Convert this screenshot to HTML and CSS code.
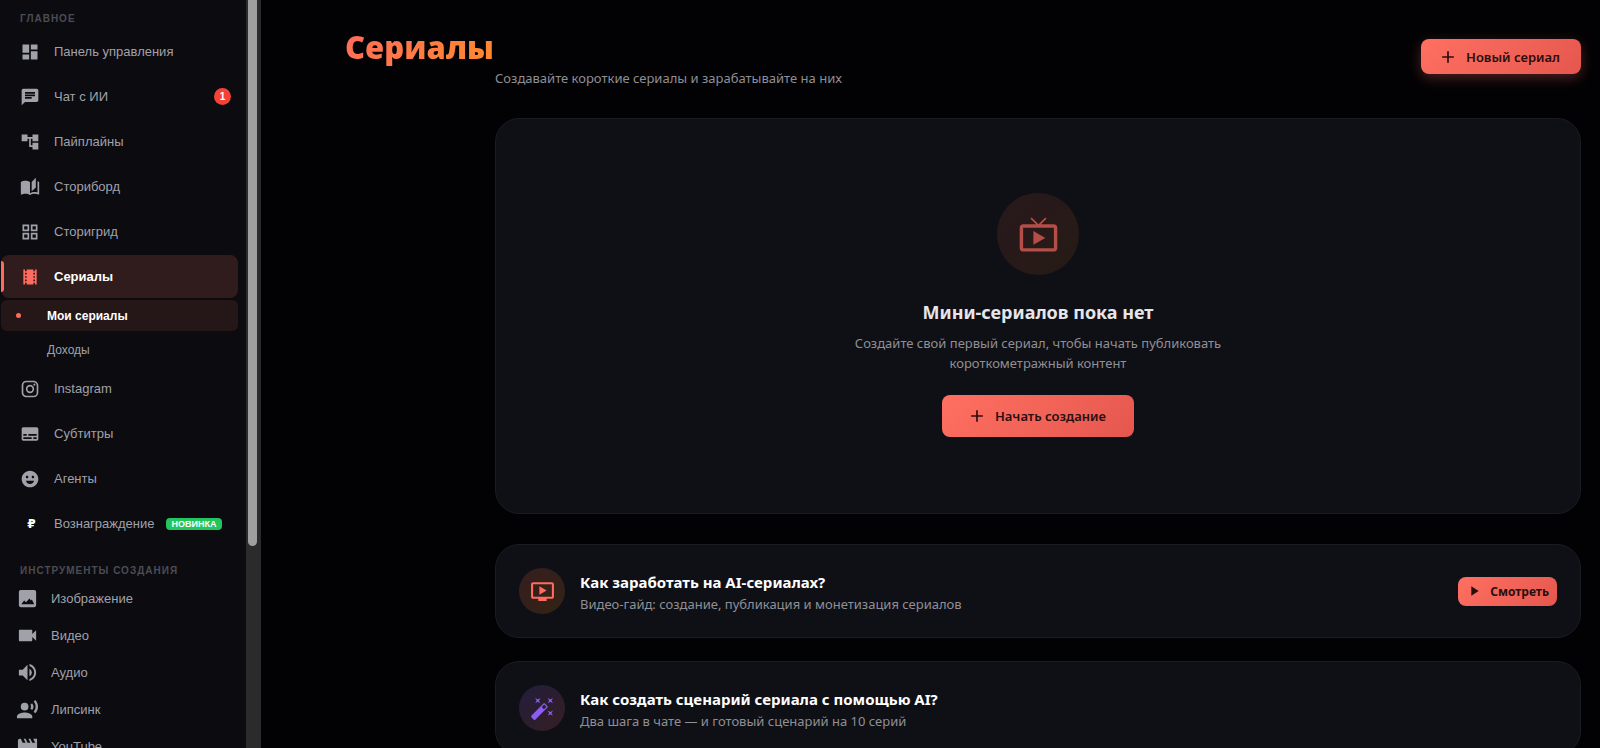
FILE: index.html
```html
<!DOCTYPE html>
<html lang="ru">
<head>
<meta charset="utf-8">
<meta name="viewport" content="width=device-width, initial-scale=1">
<title>Сериалы</title>
<link rel="stylesheet" href="styles.css">
</head>
<body>
<div class="app">
  <aside class="sidebar">
    <nav class="nav" aria-label="Основная навигация">
      <h2 class="nav-heading">Главное</h2>
      <ul class="nav-list">
        <li><a class="nav-link" href="#"><svg class="icon" viewBox="0 0 24 24"><path d="M3 13h8V3H3v10zm0 8h8v-6H3v6zm10 0h8V11h-8v10zm0-18v6h8V3h-8z"/></svg>Панель управления</a></li>
        <li><a class="nav-link" href="#"><svg class="icon" viewBox="0 0 24 24"><path d="M20 2H4c-1.1 0-1.99.9-1.99 2L2 22l4-4h14c1.1 0 2-.9 2-2V4c0-1.1-.9-2-2-2zM6 9h12v2H6V9zm8 5H6v-2h8v2zm4-6H6V6h12v2z"/></svg>Чат с ИИ<span class="count">1</span></a></li>
        <li><a class="nav-link" href="#"><svg class="icon" viewBox="0 0 24 24"><path d="M22 11V3h-7v3H9V3H2v8h7V8h2v10h4v3h7v-8h-7v3h-2V8h2v3z"/></svg>Пайплайны</a></li>
        <li><a class="nav-link" href="#"><svg class="icon" viewBox="0 0 24 24"><path d="M19 1l-5 5v11l5-4.5V1zM1 6v14.65c0 .25.25.5.5.5.1 0 .15-.05.25-.05C3.1 20.45 5.05 20 6.5 20c1.95 0 4.05.4 5.5 1.5V6c-1.45-1.1-3.55-1.5-5.5-1.5S2.45 4.9 1 6zm22 13.5V6c-.6-.45-1.25-.75-2-1v13.5c-1.1-.35-2.3-.5-3.5-.5-1.7 0-4.15.65-5.5 1.5v2c1.35-.85 3.8-1.5 5.5-1.5 1.65 0 3.35.3 4.75 1.05.1.05.15.05.25.05.25 0 .5-.25.5-.5v-1.1z"/></svg>Сториборд</a></li>
        <li><a class="nav-link" href="#"><svg class="icon" viewBox="0 0 24 24"><path d="M3 3v8h8V3H3zm6 6H5V5h4v4zm-6 4v8h8v-8H3zm6 6H5v-4h4v4zm4-16v8h8V3h-8zm6 6h-4V5h4v4zm-6 4v8h8v-8h-8zm6 6h-4v-4h4v4z"/></svg>Сторигрид</a></li>
        <li>
          <a class="nav-link nav-link-active" href="#"><svg class="icon" viewBox="0 0 24 24"><path d="M18 3v2h-2V3H8v2H6V3H4v18h2v-2h2v2h8v-2h2v2h2V3h-2zM8 17H6v-2h2v2zm0-4H6v-2h2v2zm0-4H6V7h2v2zm10 8h-2v-2h2v2zm0-4h-2v-2h2v2zm0-4h-2V7h2v2z"/></svg>Сериалы</a>
          <ul class="subnav">
            <li><a class="subnav-link subnav-link-active" href="#" aria-current="page">Мои сериалы</a></li>
            <li><a class="subnav-link" href="#">Доходы</a></li>
          </ul>
        </li>
        <li><a class="nav-link" href="#"><svg class="icon" viewBox="0 0 24 24"><path d="M7.8 2h8.4C19.4 2 22 4.6 22 7.8v8.4a5.8 5.8 0 0 1-5.8 5.8H7.8C4.6 22 2 19.4 2 16.2V7.8A5.8 5.8 0 0 1 7.8 2m-.2 2A3.6 3.6 0 0 0 4 7.6v8.8C4 18.39 5.61 20 7.6 20h8.8a3.6 3.6 0 0 0 3.6-3.6V7.6C20 5.61 18.39 4 16.4 4H7.6m9.65 1.5a1.25 1.25 0 0 1 1.25 1.25A1.25 1.25 0 0 1 17.25 8 1.25 1.25 0 0 1 16 6.75a1.25 1.25 0 0 1 1.25-1.25M12 7a5 5 0 0 1 5 5 5 5 0 0 1-5 5 5 5 0 0 1-5-5 5 5 0 0 1 5-5m0 2a3 3 0 0 0-3 3 3 3 0 0 0 3 3 3 3 0 0 0 3-3 3 3 0 0 0-3-3z"/></svg>Instagram</a></li>
        <li><a class="nav-link" href="#"><svg class="icon" viewBox="0 0 24 24"><path d="M20 4H4c-1.1 0-2 .9-2 2v12c0 1.1.9 2 2 2h16c1.1 0 2-.9 2-2V6c0-1.1-.9-2-2-2zM4 12h4v2H4v-2zm10 6H4v-2h10v2zm6 0h-4v-2h4v2zm0-4H10v-2h10v2z"/></svg>Субтитры</a></li>
        <li><a class="nav-link" href="#"><svg class="icon" viewBox="0 0 24 24"><path d="M11.99 2C6.47 2 2 6.48 2 12s4.47 10 9.99 10C17.52 22 22 17.52 22 12S17.52 2 11.99 2zM8.5 8c.83 0 1.5.67 1.5 1.5S9.33 11 8.5 11 7 10.33 7 9.5 7.67 8 8.5 8zM12 18c-2.28 0-4.22-1.66-5-4h10c-.78 2.34-2.72 4-5 4zm3.5-7c-.83 0-1.5-.67-1.5-1.5S14.67 8 15.5 8s1.5.67 1.5 1.5-.67 1.5-1.5 1.5z"/></svg>Агенты</a></li>
        <li><a class="nav-link" href="#"><span class="ruble">₽</span>Вознаграждение<span class="tag-new">Новинка</span></a></li>
      </ul>
      <h2 class="nav-heading nav-heading-tools">Инструменты создания</h2>
      <ul class="nav-list nav-list-tools">
        <li><a class="tool-link" href="#"><svg class="icon-lg" viewBox="0 0 24 24"><path d="M21 19V5c0-1.1-.9-2-2-2H5c-1.1 0-2 .9-2 2v14c0 1.1.9 2 2 2h14c1.1 0 2-.9 2-2zM5.500 18l3-4 2 2 3.500-4 1.500 2 1-1 2.500 5z"/></svg>Изображение</a></li>
        <li><a class="tool-link" href="#"><svg class="icon-lg" viewBox="0 0 24 24"><path d="M17 10.5V7c0-.55-.45-1-1-1H4c-.55 0-1 .45-1 1v10c0 .55.45 1 1 1h12c.55 0 1-.45 1-1v-3.5l4 4v-11l-4 4z"/></svg>Видео</a></li>
        <li><a class="tool-link" href="#"><svg class="icon-lg" viewBox="0 0 24 24"><path d="M3 9v6h4l5 5V4L7 9H3zm13.5 3c0-1.77-1.02-3.29-2.5-4.03v8.05c1.48-.73 2.5-2.25 2.5-4.02zM14 3.23v2.06c2.89.86 5 3.54 5 6.71s-2.11 5.85-5 6.71v2.06c4.01-.91 7-4.49 7-8.77s-2.99-7.86-7-8.77z"/></svg>Аудио</a></li>
        <li><a class="tool-link" href="#"><svg class="icon-lg" viewBox="0 0 24 24"><circle cx="9" cy="9" r="4"/><path d="M9 15c-2.67 0-8 1.34-8 4v2h16v-2c0-2.66-5.33-4-8-4zm7.76-9.64l-1.68 1.69c.84 1.18.84 2.71 0 3.89l1.68 1.69c2.02-2.02 2.02-5.07 0-7.27zM20.07 2l-1.63 1.63c2.77 3.02 2.77 7.56 0 10.74L20.07 16c3.9-3.89 3.91-9.95 0-14z"/></svg>Липсинк</a></li>
        <li><a class="tool-link" href="#"><svg class="icon-lg" viewBox="0 0 24 24"><path d="M18 4l2 4h-3l-2-4h-2l2 4h-3l-2-4H8l2 4H7L5 4H4c-1.1 0-1.99.9-1.99 2L2 18c0 1.1.9 2 2 2h16c1.1 0 2-.9 2-2V4h-4z"/></svg>YouTube</a></li>
      </ul>
    </nav>
    <div class="scroll-track" aria-hidden="true"><div class="scroll-thumb"></div></div>
  </aside>

  <main class="main">
    <header class="page-header">
      <div class="page-heading">
        <h1 class="page-title">Сериалы</h1>
        <p class="page-subtitle">Создавайте короткие сериалы и зарабатывайте на них</p>
      </div>
      <button class="btn btn-glow" type="button"><svg class="btn-icon" viewBox="0 0 24 24"><path d="M19 13h-6v6h-2v-6H5v-2h6V5h2v6h6v2z"/></svg>Новый сериал</button>
    </header>

    <div class="content">
      <section class="card empty">
        <div class="empty-badge"><svg class="empty-icon" viewBox="0 0 24 24"><path d="M21 6h-7.59l3.29-3.29L16 2l-4 4-4-4-.7.71L10.59 6H3c-1.1 0-2 .89-2 2v12c0 1.1.9 2 2 2h18c1.1 0 2-.9 2-2V8c0-1.11-.9-2-2-2zm0 14H3V8h18v12zM9 10v8l7-4z"/></svg></div>
        <h2 class="empty-title">Мини-сериалов пока нет</h2>
        <p class="empty-text">Создайте свой первый сериал, чтобы начать публиковать короткометражный контент</p>
        <button class="btn btn-large" type="button"><svg class="btn-icon" viewBox="0 0 24 24"><path d="M19 13h-6v6h-2v-6H5v-2h6V5h2v6h6v2z"/></svg>Начать создание</button>
      </section>

      <section class="card guide">
        <div class="guide-badge guide-badge-coral"><svg class="guide-icon" viewBox="0 0 24 24"><path d="M21 3H3c-1.11 0-2 .89-2 2v12c0 1.1.89 2 2 2h5v2h8v-2h5c1.1 0 1.99-.9 1.99-2L23 5c0-1.11-.9-2-2-2zm0 14H3V5h18v12zm-5-6l-7 4V7z"/></svg></div>
        <div class="guide-body">
          <h3 class="guide-title">Как заработать на AI-сериалах?</h3>
          <p class="guide-text">Видео-гайд: создание, публикация и монетизация сериалов</p>
        </div>
        <button class="btn btn-small" type="button"><svg class="btn-icon-small" viewBox="0 0 24 24"><path d="M8 5v14l11-7z"/></svg>Смотреть</button>
      </section>

      <section class="card guide">
        <div class="guide-badge guide-badge-violet"><svg class="guide-icon" viewBox="0 0 24 24"><path d="M7.5 5.6L10 7 8.6 4.5 10 2 7.5 3.4 5 2l1.4 2.5L5 7zm12 9.8L17 14l1.4 2.5L17 19l2.5-1.4L22 19l-1.4-2.5L22 14zM22 2l-2.5 1.4L17 2l1.4 2.5L17 7l2.5-1.4L22 7l-1.4-2.5zm-7.63 5.29c-.39-.39-1.02-.39-1.41 0L1.29 18.96c-.39.39-.39 1.02 0 1.41l2.34 2.34c.39.39 1.02.39 1.41 0L16.7 11.05c.39-.39.39-1.02 0-1.41l-2.33-2.35zm-1.03 5.49l-2.12-2.12 2.44-2.44 2.12 2.12-2.44 2.44z"/></svg></div>
        <div class="guide-body">
          <h3 class="guide-title">Как создать сценарий сериала с помощью AI?</h3>
          <p class="guide-text">Два шага в чате — и готовый сценарий на 10 серий</p>
        </div>
      </section>
    </div>
  </main>
</div>
</body>
</html>
```
FILE: styles.css
```css
:root {
  --coral: #ff6b5e;
  --muted: #a1a1aa;
  --card: #0f1015;
}

* {
  box-sizing: border-box;
}

body {
  margin: 0;
  background: #020204;
  color: #fff;
  font-family: "Noto Sans", "Open Sans", sans-serif;
}

h1, h2, h3, p, ul {
  margin: 0;
  padding: 0;
}

ul {
  list-style: none;
}

a {
  color: inherit;
  text-decoration: none;
}

svg {
  fill: currentColor;
  flex: none;
}

.app {
  display: flex;
  height: 100vh;
  overflow: hidden;
}

/* Sidebar */

.sidebar {
  display: flex;
  flex: none;
  width: 261px;
  background: #0b0b10;
  overflow: hidden;
  font-family: "Liberation Sans", Arial, sans-serif;
}

.nav {
  flex: 1;
  min-width: 0;
  padding: 13px 8px 0 1px;
}

.nav-heading {
  padding-left: 19px;
  color: #4c4c53;
  font-size: 10px;
  font-weight: 700;
  line-height: 12px;
  letter-spacing: 1px;
  text-transform: uppercase;
}

.nav-list {
  display: flex;
  flex-direction: column;
  gap: 2px;
  padding-top: 5px;
}

.nav-list-tools {
  padding-top: 4px;
}

.nav-link {
  display: flex;
  align-items: center;
  gap: 11px;
  height: 43px;
  padding: 0 7px 0 19px;
  border-radius: 8px;
  color: var(--muted);
  font-size: 13px;
}

.nav-link-active {
  position: relative;
  background: #301c1c;
  color: #fff;
  font-weight: 700;
}

.nav-link-active::before {
  content: "";
  position: absolute;
  left: 0;
  top: 6px;
  bottom: 6px;
  width: 3px;
  border-radius: 0 3px 3px 0;
  background: var(--coral);
}

.nav-link-active .icon {
  color: var(--coral);
}

.icon,
.ruble {
  width: 20px;
  margin-right: 3px;
}

.icon {
  height: 20px;
}

.count {
  display: grid;
  place-items: center;
  width: 17px;
  height: 17px;
  margin-left: auto;
  border-radius: 50%;
  background: #f44336;
  color: #fff;
  font-size: 10px;
  font-weight: 700;
}

.ruble {
  padding-left: 3px;
  color: #fff;
  font-family: "DejaVu Sans", sans-serif;
  font-size: 12px;
  font-weight: 700;
  text-align: center;
}

.tag-new {
  padding: 0 6px;
  border-radius: 4px;
  background: #22c55e;
  color: #fff;
  font-size: 9px;
  font-weight: 700;
  line-height: 12px;
  text-transform: uppercase;
}

.subnav {
  display: flex;
  flex-direction: column;
  gap: 3px;
  padding: 2px 0 0;
}

.subnav-link {
  display: flex;
  align-items: center;
  height: 31px;
  padding-left: 46px;
  border-radius: 6px;
  color: var(--muted);
  font-size: 12px;
}

.subnav-link-active {
  position: relative;
  background: #251617;
  color: #fff;
  font-weight: 700;
}

.subnav-link-active::before {
  content: "";
  position: absolute;
  left: 15px;
  top: 13px;
  width: 5px;
  height: 5px;
  border-radius: 50%;
  background: var(--coral);
}

.nav-heading-tools {
  padding-top: 20px;
}

.tool-link {
  display: flex;
  align-items: center;
  gap: 12px;
  height: 35px;
  padding-left: 15px;
  color: var(--muted);
  font-size: 13px;
}

.icon-lg {
  width: 23px;
  height: 23px;
}

.scroll-track {
  flex: none;
  width: 15px;
  padding: 0 4px 0 2px;
  background: #2b2b2b;
}

.scroll-thumb {
  height: 73%;
  border-radius: 0 0 5px 5px;
  background: #9f9f9f;
}

/* Main */

.main {
  flex: 1;
  min-width: 0;
  padding: 28px 19px 0 84px;
}

.page-header {
  display: flex;
  justify-content: space-between;
  align-items: flex-start;
  margin-bottom: 30px;
}

.page-heading {
  display: grid;
  grid-template-columns: 150px auto;
  row-gap: 2px;
}

.page-title {
  grid-column: 1 / -1;
  justify-self: start;
  background: linear-gradient(135deg, #ff6b5e, #ff8a2b);
  background-clip: text;
  -webkit-background-clip: text;
  color: transparent;
  font-family: "Open Sans", "Noto Sans", sans-serif;
  font-size: 31px;
  font-weight: 800;
  line-height: 38px;
}

.page-subtitle {
  grid-column: 2;
  color: #8f8f96;
  font-size: 13px;
  line-height: 20px;
}

.btn {
  display: inline-flex;
  align-items: center;
  justify-content: center;
  gap: 8px;
  border: 0;
  border-radius: 8px;
  background: linear-gradient(135deg, #ff7062, #e5574e);
  color: #2a0e0e;
  font-family: inherit;
  font-size: 13px;
  font-weight: 600;
}

.btn-icon {
  width: 20px;
  height: 20px;
}

.btn-icon-small {
  width: 16px;
  height: 16px;
}

.btn-glow {
  height: 35px;
  margin-top: 11px;
  padding: 0 21px 0 17px;
  box-shadow: 0 4px 14px rgba(255, 107, 94, 0.3);
}

.btn-large {
  height: 42px;
  padding: 0 28px 0 25px;
}

.btn-small {
  height: 29px;
  padding: 0 8px;
  font-size: 12px;
  font-weight: 700;
}

.content {
  padding-left: 150px;
}

.card {
  border: 1px solid #1b1c21;
  border-radius: 24px;
  background: var(--card);
}

.empty {
  display: flex;
  flex-direction: column;
  align-items: center;
  margin-bottom: 30px;
  padding: 74px 24px 76px;
  text-align: center;
}

.empty-badge {
  display: grid;
  place-items: center;
  width: 82px;
  height: 82px;
  margin-bottom: 24px;
  border-radius: 50%;
  background: linear-gradient(135deg, #28181c, #261b15);
}

.empty-icon {
  width: 41px;
  height: 41px;
  color: #b34e48;
}

.empty-title {
  margin-bottom: 8px;
  color: #e6e6ea;
  font-size: 18px;
  font-weight: 700;
  line-height: 26px;
}

.empty-text {
  max-width: 376px;
  margin-bottom: 22px;
  color: #8f8f96;
  font-size: 13px;
  line-height: 20px;
}

.guide {
  display: flex;
  align-items: center;
  gap: 15px;
  margin-bottom: 23px;
  padding: 23px;
}

.guide-badge {
  display: grid;
  flex: none;
  place-items: center;
  width: 46px;
  height: 46px;
  border-radius: 50%;
}

.guide-badge-coral {
  background: linear-gradient(135deg, #351e20, #332314);
  color: var(--coral);
}

.guide-badge-violet {
  background: linear-gradient(135deg, #221d3d, #351e22);
  color: #8b5cf6;
}

.guide-icon {
  width: 25px;
  height: 25px;
}

.guide-body {
  display: flex;
  flex: 1;
  flex-direction: column;
  padding-top: 2px;
}

.guide-title {
  font-size: 15px;
  font-weight: 700;
  line-height: 24px;
}

.guide-text {
  color: #8f8f96;
  font-size: 13px;
  line-height: 20px;
}
```
